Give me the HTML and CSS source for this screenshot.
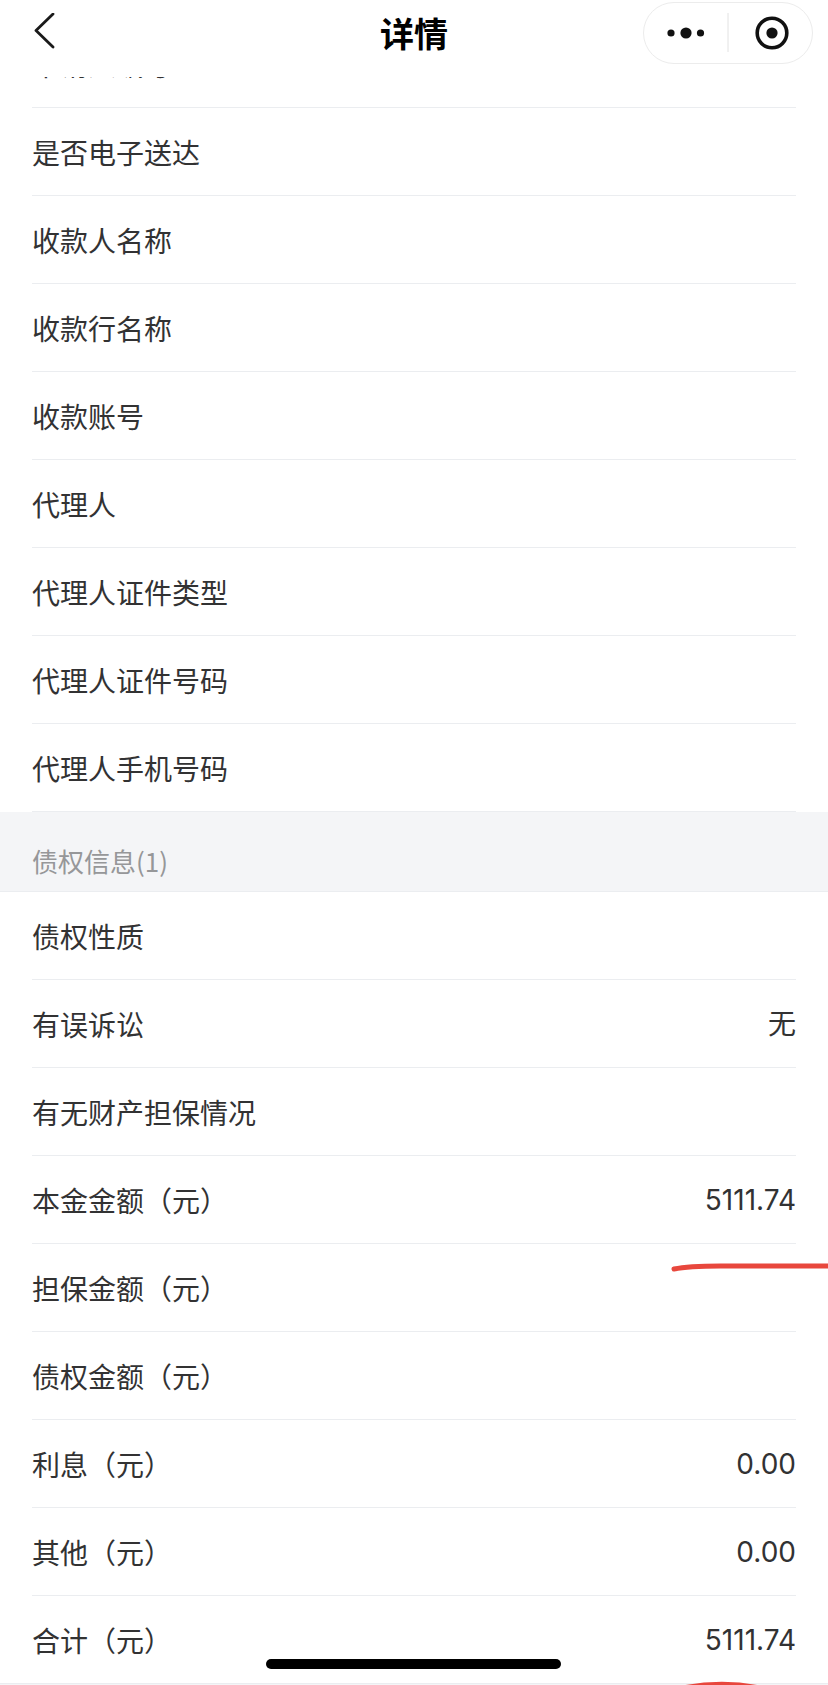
FILE: index.html
```html
<!DOCTYPE html>
<html lang="zh-CN">
<head>
<meta charset="utf-8">
<title>详情</title>
<link rel="stylesheet" href="styles.css">
</head>
<body>
<div class="page">
  <header class="navbar">
    <div class="nav-left">
      <svg class="back" width="24" height="40" viewBox="0 0 24 40">
        <polyline points="20,1 3,17.5 20,34" fill="none" stroke="#1a1a1a" stroke-width="2.8" stroke-linecap="round" stroke-linejoin="round"/>
      </svg>
    </div>
    <div class="nav-title">详情</div>
    <div class="nav-right">
      <div class="capsule">
        <svg width="170" height="62" viewBox="0 0 170 62">
          <circle cx="28" cy="31" r="3.6" fill="#111"/>
          <circle cx="43" cy="31" r="5.6" fill="#111"/>
          <circle cx="57.5" cy="31" r="3.6" fill="#111"/>
          <line x1="85" y1="11" x2="85" y2="50" stroke="#e2e2e2" stroke-width="1"/>
          <circle cx="129" cy="31" r="14.8" fill="none" stroke="#111" stroke-width="3.6"/>
          <circle cx="129" cy="31" r="5.6" fill="#111"/>
        </svg>
      </div>
    </div>
  </header>

  <div class="viewport">
    <div class="list list-first">
      <div class="cell"><span class="label">申请人编号</span></div>
      <div class="cell"><span class="label">是否电子送达</span></div>
      <div class="cell"><span class="label">收款人名称</span></div>
      <div class="cell"><span class="label">收款行名称</span></div>
      <div class="cell"><span class="label">收款账号</span></div>
      <div class="cell"><span class="label">代理人</span></div>
      <div class="cell"><span class="label">代理人证件类型</span></div>
      <div class="cell"><span class="label">代理人证件号码</span></div>
      <div class="cell"><span class="label">代理人手机号码</span></div>
    </div>

    <div class="section-title">债权信息(1)</div>

    <div class="list">
      <div class="cell"><span class="label">债权性质</span></div>
      <div class="cell"><span class="label">有误诉讼</span><span class="value">无</span></div>
      <div class="cell"><span class="label">有无财产担保情况</span></div>
      <div class="cell"><span class="label">本金金额（元）</span><span class="value">5111.74</span></div>
      <div class="cell"><span class="label">担保金额（元）</span></div>
      <div class="cell"><span class="label">债权金额（元）</span></div>
      <div class="cell"><span class="label">利息（元）</span><span class="value">0.00</span></div>
      <div class="cell"><span class="label">其他（元）</span><span class="value">0.00</span></div>
      <div class="cell"><span class="label">合计（元）</span><span class="value">5111.74</span></div>
    </div>
    <div class="section-next"></div>
  </div>

  <svg class="marks" width="828" height="1685" viewBox="0 0 828 1685">
    <path d="M674 1269 Q690 1265.5 730 1266 L830 1266" fill="none" stroke="#e8473d" stroke-width="5" stroke-linecap="round"/>
    <path d="M683 1688 Q725 1680 764 1689" fill="none" stroke="#e8473d" stroke-width="5" stroke-linecap="round"/>
  </svg>

  <div class="home-indicator"></div>
</div>
</body>
</html>
```

FILE: styles.css
```css
html, body {
  margin: 0;
  padding: 0;
  background: #ffffff;
}

body {
  font-family: "Inter", "Noto Sans CJK SC", sans-serif;
  color: #323233;
}

.page {
  position: relative;
  width: 828px;
  height: 1685px;
  overflow: hidden;
  background: #ffffff;
}

.navbar {
  height: 77px;
  display: grid;
  grid-template-columns: 1fr auto 1fr;
  align-items: start;
  background: #ffffff;
}

.nav-left {
  height: 66px;
  display: flex;
  align-items: center;
  padding-left: 33px;
}

.back {
  display: block;
}

.nav-title {
  height: 66px;
  line-height: 66px;
  font-family: "Noto Sans CJK SC", sans-serif;
  font-size: 34px;
  font-weight: 700;
  color: #000000;
}

.nav-right {
  display: flex;
  justify-content: flex-end;
  padding-top: 2px;
  padding-right: 15px;
}

.capsule {
  width: 170px;
  height: 62px;
  box-sizing: border-box;
  border: 1px solid #ececec;
  border-radius: 31px;
  background: rgba(255, 255, 255, 0.9);
  position: relative;
}

.capsule svg {
  position: absolute;
  left: -1px;
  top: -1px;
  display: block;
}

.viewport {
  height: 1608px;
  overflow: hidden;
}

.list-first {
  margin-top: -57px;
}

.cell {
  height: 88px;
  box-sizing: border-box;
  margin: 0 32px;
  border-bottom: 1px solid #ebedf0;
  display: flex;
  align-items: center;
  justify-content: space-between;
  font-size: 28px;
  line-height: 48px;
}

.label {
  font-family: "Noto Sans CJK SC", sans-serif;
  color: #323233;
}

.value {
  font-family: "Inter", "Noto Sans CJK SC", sans-serif;
  color: #323233;
}

.section-title {
  height: 80px;
  box-sizing: border-box;
  padding: 36px 32px 0;
  font-family: "Noto Sans CJK SC", sans-serif;
  font-size: 26px;
  line-height: 26px;
  color: #969799;
  background: #f4f5f7;
  border-bottom: 1px solid #ebedf0;
}

.section-next {
  height: 40px;
  background: #f4f5f7;
  border-top: 1px solid #ebedf0;
  margin-top: -1px;
}

.marks {
  position: absolute;
  left: 0;
  top: 0;
  pointer-events: none;
}

.home-indicator {
  position: absolute;
  left: 266px;
  top: 1659px;
  width: 295px;
  height: 10px;
  border-radius: 5px;
  background: #000000;
}
```
